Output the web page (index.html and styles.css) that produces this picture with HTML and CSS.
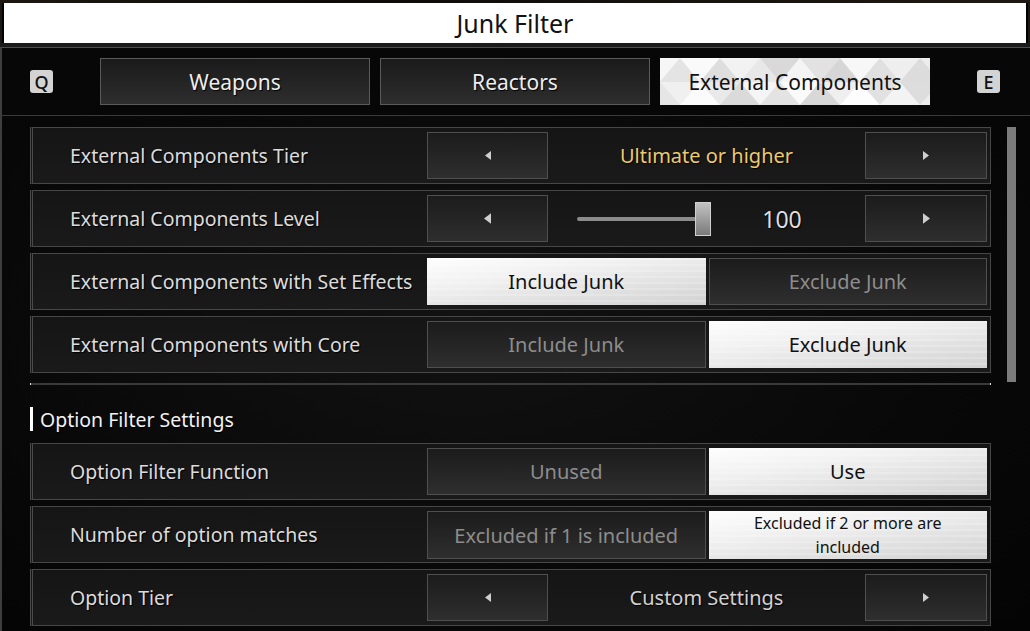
FILE: index.html
```html
<!DOCTYPE html>
<html lang="en">
<head>
<meta charset="utf-8">
<title>Junk Filter</title>
<link rel="stylesheet" href="styles.css">
</head>
<body>
<div class="screen">
  <header class="title">Junk Filter</header>
  <div class="band"></div>
  <nav class="tabs">
    <span class="key">Q</span>
    <div class="tab">Weapons</div>
    <div class="tab">Reactors</div>
    <div class="tab tab-active">
      <svg class="tri" viewBox="0 0 270 47" preserveAspectRatio="none" aria-hidden="true">
        <rect width="270" height="47" fill="#ececec"/>
        <polygon points="-20,0 20,0 0,24" fill="#f6f6f6"/>
        <polygon points="0,24 40,24 20,0" fill="#e4e4e4"/>
        <polygon points="20,0 60,0 40,24" fill="#fafafa"/>
        <polygon points="40,24 80,24 60,0" fill="#dedede"/>
        <polygon points="60,0 100,0 80,24" fill="#f2f2f2"/>
        <polygon points="80,24 120,24 100,0" fill="#e8e8e8"/>
        <polygon points="100,0 140,0 120,24" fill="#d9d9d9"/>
        <polygon points="120,24 160,24 140,0" fill="#f4f4f4"/>
        <polygon points="140,0 180,0 160,24" fill="#e2e2e2"/>
        <polygon points="160,24 200,24 180,0" fill="#d6d6d6"/>
        <polygon points="180,0 220,0 200,24" fill="#f7f7f7"/>
        <polygon points="200,24 240,24 220,0" fill="#e0e0e0"/>
        <polygon points="220,0 260,0 240,24" fill="#eeeeee"/>
        <polygon points="240,24 280,24 260,0" fill="#dcdcdc"/>
        <polygon points="0,24 40,24 20,47" fill="#f0f0f0"/>
        <polygon points="-20,47 20,47 0,24" fill="#e6e6e6"/>
        <polygon points="20,47 60,47 40,24" fill="#fbfbfb"/>
        <polygon points="40,24 80,24 60,47" fill="#e9e9e9"/>
        <polygon points="60,47 100,47 80,24" fill="#dadada"/>
        <polygon points="80,24 120,24 100,47" fill="#f5f5f5"/>
        <polygon points="100,47 140,47 120,24" fill="#e3e3e3"/>
        <polygon points="120,24 160,24 140,47" fill="#fafafa"/>
        <polygon points="140,47 180,47 160,24" fill="#d8d8d8"/>
        <polygon points="160,24 200,24 180,47" fill="#efefef"/>
        <polygon points="180,47 220,47 200,24" fill="#fdfdfd"/>
        <polygon points="200,24 240,24 220,47" fill="#e1e1e1"/>
        <polygon points="220,47 260,47 240,24" fill="#f3f3f3"/>
        <polygon points="240,24 280,24 260,47" fill="#dddddd"/>
      </svg>
      <span class="tab-label">External Components</span>
    </div>
    <span class="key">E</span>
  </nav>
  <main class="content">
    <div class="list">
      <div class="row">
        <div class="label">External Components Tier</div>
        <div class="ctrl arrows">
          <div class="box"><svg class="arr" viewBox="0 0 6 9"><polygon points="6,0 6,9 0,4.5" fill="#cfcfcf"/></svg></div>
          <div class="value gold">Ultimate or higher</div>
          <div class="box"><svg class="arr" viewBox="0 0 6 9"><polygon points="0,0 0,9 6,4.5" fill="#cfcfcf"/></svg></div>
        </div>
      </div>
      <div class="row">
        <div class="label">External Components Level</div>
        <div class="ctrl arrows">
          <div class="box"><svg class="arr arr-lg" viewBox="0 0 6 9"><polygon points="6,0 6,9 0,4.5" fill="#cfcfcf"/></svg></div>
          <div class="value slider-value">
            <div class="slider"><div class="track"></div><div class="thumb"></div></div>
            <div class="num">100</div>
          </div>
          <div class="box"><svg class="arr arr-lg" viewBox="0 0 6 9"><polygon points="0,0 0,9 6,4.5" fill="#cfcfcf"/></svg></div>
        </div>
      </div>
      <div class="row">
        <div class="label">External Components with Set Effects</div>
        <div class="ctrl pair">
          <div class="opt on">Include Junk</div>
          <div class="opt box">Exclude Junk</div>
        </div>
      </div>
      <div class="row">
        <div class="label">External Components with Core</div>
        <div class="ctrl pair">
          <div class="opt box">Include Junk</div>
          <div class="opt on">Exclude Junk</div>
        </div>
      </div>
      <div class="sep"></div>
      <h2 class="section">Option Filter Settings</h2>
      <div class="row">
        <div class="label">Option Filter Function</div>
        <div class="ctrl pair">
          <div class="opt box">Unused</div>
          <div class="opt on">Use</div>
        </div>
      </div>
      <div class="row">
        <div class="label">Number of option matches</div>
        <div class="ctrl pair">
          <div class="opt box">Excluded if 1 is included</div>
          <div class="opt on small">Excluded if 2 or more are included</div>
        </div>
      </div>
      <div class="row">
        <div class="label">Option Tier</div>
        <div class="ctrl arrows">
          <div class="box"><svg class="arr" viewBox="0 0 6 9"><polygon points="6,0 6,9 0,4.5" fill="#cfcfcf"/></svg></div>
          <div class="value">Custom Settings</div>
          <div class="box"><svg class="arr" viewBox="0 0 6 9"><polygon points="0,0 0,9 6,4.5" fill="#cfcfcf"/></svg></div>
        </div>
      </div>
    </div>
    <div class="scroll"><div class="scroll-thumb"></div></div>
  </main>
</div>
</body>
</html>
```
FILE: styles.css
```css
* { box-sizing: border-box; }
html, body { margin: 0; padding: 0; }
body {
  width: 1030px;
  height: 631px;
  overflow: hidden;
  background: #16120d;
  font-family: "Noto Sans", "Open Sans", sans-serif;
}
.screen {
  display: flex;
  flex-direction: column;
  height: 631px;
  background: linear-gradient(90deg, #1c1711 0%, #0c0b0a 30%, #1e1812 100%);
}
.title {
  margin: 3px 2px 0 2px;
  height: 40px;
  background: #ffffff;
  border-left: 2px solid #000;
  border-right: 2px solid #000;
  display: flex;
  align-items: center;
  justify-content: center;
  font-size: 25px;
  color: #111;
  flex: none;
}
.band {
  height: 4px;
  background: #1b1b1b;
  flex: none;
}
.tabs {
  flex: none;
  height: 69px;
  border-top: 1px solid #4e4e4e;
  border-bottom: 1px solid #3a3a3a;
  border-left: 2px solid #3e3e3e;
  background: #070707;
  display: flex;
  align-items: center;
  padding: 0 30px 0 28px;
}
.key {
  width: 23px;
  height: 23px;
  border-radius: 3px;
  background: #d3d3d3;
  color: #111;
  font-size: 18px;
  font-weight: 500;
  display: flex;
  align-items: center;
  justify-content: center;
  flex: none;
}
.key:first-child { margin-right: 47px; }
.key:last-child { margin-left: 47px; }
.tab {
  width: 270px;
  height: 47px;
  margin-right: 10px;
  flex: none;
  border: 1px solid #5a5a5a;
  background-image:
    linear-gradient(#e8e8e8, #e8e8e8), linear-gradient(#e8e8e8, #e8e8e8),
    linear-gradient(#e8e8e8, #e8e8e8), linear-gradient(#e8e8e8, #e8e8e8),
    linear-gradient(180deg, #1a1a1a, #2e2e2e);
  background-size: 1px 1px, 1px 1px, 1px 1px, 1px 1px, auto;
  background-position: left top, right top, left bottom, right bottom, 0 0;
  background-repeat: no-repeat;
  background-origin: border-box;
  display: flex;
  align-items: center;
  justify-content: center;
  font-size: 21px;
  color: #eeeeee;
  text-shadow: 1px 1px 1px #000;
}
.tab-active {
  position: relative;
  overflow: hidden;
  border: none;
  margin-right: 0;
  color: #111;
  text-shadow: none;
}
.tri {
  position: absolute;
  inset: 0;
  width: 100%;
  height: 100%;
}
.tab-label { position: relative; }
.content {
  flex: 1;
  display: flex;
  border-left: 2px solid #3e3e3e;
  padding: 11px 0 0 28px;
  background: radial-gradient(ellipse at 45% 40%, #121212 0%, #080808 60%, #040404 100%);
  overflow: hidden;
}
.list {
  width: 961px;
  flex: none;
}
.scroll {
  width: 9px;
  margin-left: 16px;
  flex: none;
}
.scroll-thumb {
  height: 255px;
  background: #7b7b7b;
}
.row {
  height: 57px;
  margin-bottom: 6px;
  display: flex;
  align-items: center;
  border: 1px solid #474747;
  border-left: 3px double #4a4a4a;
  background-image:
    linear-gradient(#dcdcdc, #dcdcdc), linear-gradient(#dcdcdc, #dcdcdc),
    linear-gradient(#dcdcdc, #dcdcdc), linear-gradient(#dcdcdc, #dcdcdc),
    linear-gradient(180deg, #151515, #1a1a1a);
  background-size: 1px 1px, 1px 1px, 1px 1px, 1px 1px, auto;
  background-position: left top, right top, left bottom, right bottom, 0 0;
  background-repeat: no-repeat;
  background-origin: border-box;
}
.label {
  width: 394px;
  flex: none;
  padding-left: 37px;
  font-size: 19.5px;
  color: #dcdcdc;
  text-shadow: 1px 1px 1px #000;
  white-space: nowrap;
}
.ctrl {
  width: 560px;
  height: 47px;
  flex: none;
}
.pair {
  display: grid;
  grid-template-columns: 1fr 1fr;
  column-gap: 3px;
}
.arrows {
  display: grid;
  grid-template-columns: 121px 1fr 122px;
}
.box {
  border: 1px solid #4f4f4f;
  background-image:
    linear-gradient(#e8e8e8, #e8e8e8), linear-gradient(#e8e8e8, #e8e8e8),
    linear-gradient(#e8e8e8, #e8e8e8), linear-gradient(#e8e8e8, #e8e8e8),
    linear-gradient(180deg, #1b1b1b, #2f2f2f);
  background-size: 1px 1px, 1px 1px, 1px 1px, 1px 1px, auto;
  background-position: left top, right top, left bottom, right bottom, 0 0;
  background-repeat: no-repeat;
  background-origin: border-box;
  display: flex;
  align-items: center;
  justify-content: center;
}
.arr { width: 6px; height: 9px; }
.arr-lg { width: 7px; height: 11px; }
.value {
  display: flex;
  align-items: center;
  justify-content: center;
  font-size: 20px;
  color: #d2d2d2;
  text-shadow: 1px 1px 1px #000;
}
.gold { color: #eccb6c; }
.slider-value {
  justify-content: flex-start;
  padding-left: 29px;
}
.slider {
  width: 134px;
  height: 34px;
  display: flex;
  align-items: center;
  flex: none;
}
.track {
  width: 120px;
  height: 4px;
  border-radius: 2px;
  background: #8c8c8c;
  margin-right: -2px;
}
.thumb {
  width: 16px;
  height: 34px;
  border: 1px solid #d0d0d0;
  background: linear-gradient(180deg, #c2c2c2, #7a7a7a);
}
.num {
  flex: 1;
  text-align: center;
  padding-right: 12px;
  font-size: 23px;
  color: #dedede;
}
.opt {
  display: flex;
  align-items: center;
  justify-content: center;
  text-align: center;
  font-size: 20px;
  color: #8d8d8d;
}
.opt.on {
  color: #111;
  background:
    repeating-linear-gradient(180deg, rgba(255,255,255,0.18) 0 2px, rgba(0,0,0,0) 2px 6px),
    linear-gradient(172deg, #fefefe 0%, #f1f1f1 35%, #e2e2e2 65%, #d2d2d2 100%);
}
.opt.small {
  font-size: 16px;
  line-height: 24px;
  padding: 0 30px;
}
.sep {
  height: 2px;
  margin-top: 10px;
  background: #3a3a3a;
  border-left: 1px solid #e0e0e0;
  border-right: 1px solid #e0e0e0;
}
.section {
  margin: 22px 0 12px 0;
  height: 24px;
  border-left: 3px solid #ffffff;
  padding-left: 7px;
  display: flex;
  align-items: center;
  font-size: 19.5px;
  font-weight: normal;
  color: #f2f2f2;
  text-shadow: 1px 1px 1px #000;
}
```
